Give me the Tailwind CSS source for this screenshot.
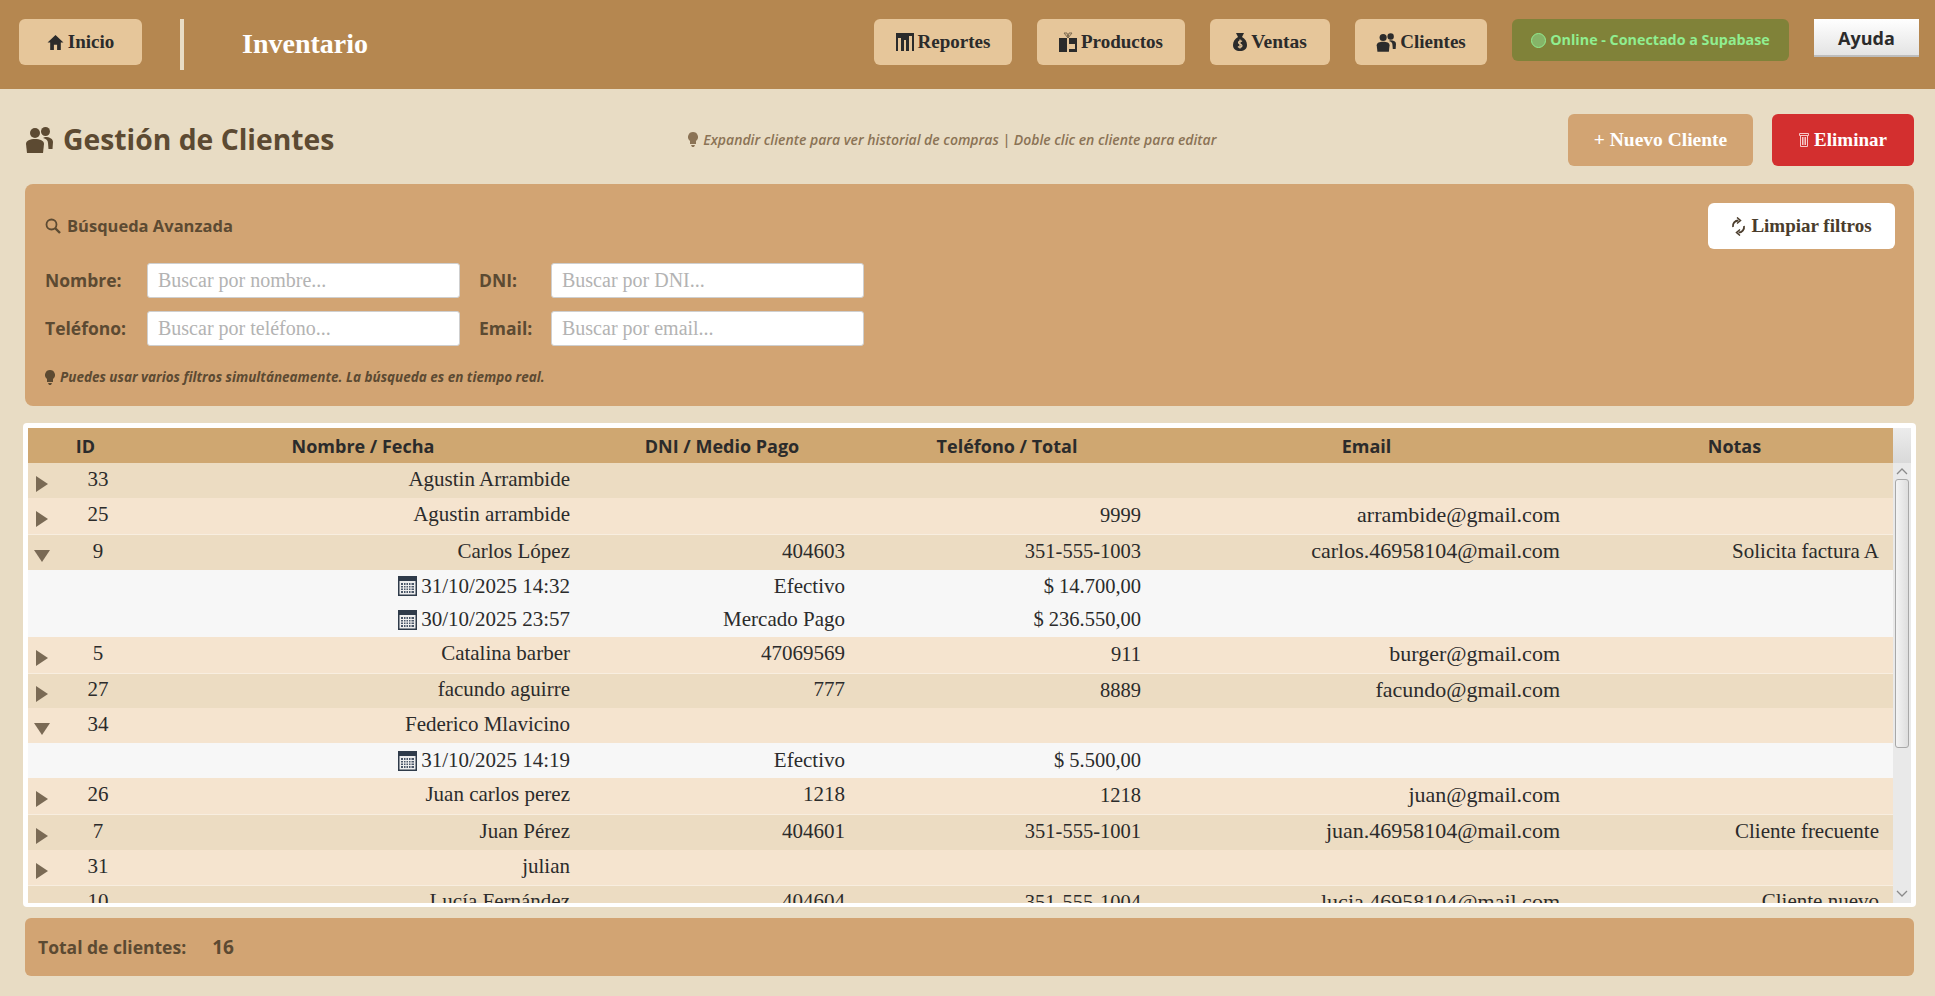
<!DOCTYPE html>
<html lang="es">
<head>
  <meta charset="UTF-8" />
  <title>Inventario</title>
  <script src="https://cdn.jsdelivr.net/npm/@tailwindcss/browser@4"></script>
</head>
<body class="h-[996px] w-[1935px] overflow-hidden bg-[#e8dcc4] font-['Liberation_Serif',serif] text-[#2b2b2b]">

  <!-- Navbar -->
  <header class="h-[89px] bg-[#b58750] flex items-start pt-[19px] pl-[19px] pr-[16px]">
    <a class="w-[123px] h-[46px] rounded-md bg-[#e6c69a] flex items-center justify-center gap-[4px] text-[19px] font-bold">
      <svg class="w-[17px] h-[17px]" viewBox="0 0 16 16" fill="#2b2b2b"><path d="M8 1 0.500 8H3v7h3.500v-5h3v5H13V8h2.500z"/></svg>
      Inicio
    </a>
    <div class="w-[4px] h-[51px] bg-[#e8dcc4] ml-[38px]"></div>
    <h1 class="ml-[58px] mt-[4px] text-[28px] font-bold text-white">Inventario</h1>
    <nav class="ml-auto flex items-start">
      <a class="w-[138px] h-[46px] rounded-md bg-[#e6c69a] flex items-center justify-center gap-[4px] text-[19px] font-bold">
        <svg class="w-[18px] h-[18px]" viewBox="0 0 18 18" fill="#2b2b2b"><path d="M0 0h18v18h-2V3h-3v15h-3V7H8v11H5V5H2v13H0z"/></svg>
        Reportes
      </a>
      <a class="ml-[25px] w-[148px] h-[46px] rounded-md bg-[#e6c69a] flex items-center justify-center gap-[4px] text-[19px] font-bold">
        <svg class="w-[18px] h-[20px]" viewBox="0 0 18 20" fill="#2b2b2b"><path d="M0 6h8v14H0zM10 6h8v14h-8v-3h6v-5h-6z"/><path d="M9 6 5 1h3l1 5 1-5h3z" fill="none" stroke="#7d6a50"/></svg>
        Productos
      </a>
      <a class="ml-[25px] w-[120px] h-[46px] rounded-md bg-[#e6c69a] flex items-center justify-center gap-[4px] text-[19.500px] font-bold">
        <svg class="w-[14px] h-[18px]" viewBox="0 0 14 18" fill="#2b2b2b"><path d="M3 0h8L9 4c3 1.500 5 4.500 5 8 0 4-3 6-7 6s-7-2-7-6c0-3.500 2-6.500 5-8z"/><path d="M9 8.500C8 7.500 5.500 7.800 5.500 9.500S9 11 9 12.800 6 14.500 5 13.500M7 6.500v9" fill="none" stroke="#e6c69a" stroke-width="1.200"/></svg>
        Ventas
      </a>
      <a class="ml-[25px] w-[132px] h-[46px] rounded-md bg-[#e6c69a] flex items-center justify-center gap-[4px] text-[19px] font-bold">
        <svg class="w-[20px] h-[19px]" viewBox="0 0 28 26" fill="#2b2b2b"><circle cx="10" cy="6" r="5"/><circle cx="20.500" cy="4.500" r="4.500"/><path d="M2 26 1 17c0-3.500 4-5 9-5s9 1.500 9 5l-1 9z"/><path d="M20 10c5 0 8 2 8 5l-.5 7h-4l-.5-6c0-2.500-2-4.500-5-5z"/></svg>
        Clientes
      </a>
      <div class="ml-[25px] w-[277px] h-[42px] rounded-md bg-[#808239] flex items-center justify-center gap-[4px] font-['Open_Sans',sans-serif] text-[14.300px] font-bold text-[#90ee90]">
        <span class="w-[15px] h-[15px] rounded-full bg-[#86b468] border border-[#90ee90]"></span>
        Online - Conectado a Supabase
      </div>
      <button class="ml-[25px] w-[105px] h-[38px] pt-[2px] bg-gradient-to-b from-white to-[#e4e4e4] border-b-2 border-[#bdbdbd] font-['Open_Sans',sans-serif] text-[18px] font-bold">Ayuda</button>
    </nav>
  </header>

  <main class="pl-[25px] pr-[21px]">
    <!-- Titulo -->
    <div class="h-[95px] flex items-start pt-[25px]">
      <svg class="w-[28px] h-[26px] mt-[13px]" viewBox="0 0 28 26" fill="#5c4a32"><circle cx="10" cy="6" r="5"/><circle cx="20.500" cy="4.500" r="4.500"/><path d="M2 26 1 17c0-3.500 4-5 9-5s9 1.500 9 5l-1 9z"/><path d="M20 10c5 0 8 2 8 5l-.5 7h-4l-.5-6c0-2.500-2-4.500-5-5z"/></svg>
      <h2 class="ml-[10px] mt-[4px] font-['Open_Sans',sans-serif] text-[28.300px] font-bold text-[#5c4a32]">Gestión de Clientes</h2>
      <p class="ml-[354px] mt-[15px] flex items-center gap-[5px] font-['Open_Sans',sans-serif] text-[14px] italic font-semibold text-[#8b7355]">
        <svg class="w-[10px] h-[15px]" viewBox="0 0 10 15" fill="#8b7355"><path d="M5 0a5 5 0 0 1 3 9v3H2V9a5 5 0 0 1 3-9zM3 13h4l-1 2H4z"/></svg>
        Expandir cliente para ver historial de compras | Doble clic en cliente para editar
      </p>
      <button class="ml-auto w-[185px] h-[52px] rounded-md bg-[#d2a473] text-white text-[19.500px] font-bold">+ Nuevo Cliente</button>
      <button class="ml-[19px] w-[142px] h-[52px] rounded-md bg-[#d32f2f] text-white text-[19px] font-bold flex items-center justify-center gap-[5px]">
        <svg class="w-[10px] h-[14px]" viewBox="0 0 10 14" fill="none" stroke="#f7c9c9"><path d="M0.500 0.500h9v2h-9zM1.500 2.500h7v11h-7zM3.500 4v8M5 4v8M6.500 4v8"/></svg>
        Eliminar
      </button>
    </div>

    <!-- Filtros -->
    <section class="h-[222px] rounded-lg bg-[#d2a473] px-[20px] pt-[19px]">
      <div class="flex items-start justify-between">
        <h3 class="mt-[11px] flex items-center gap-[6px] font-['Open_Sans',sans-serif] text-[16.500px] font-bold text-[#5c4a32]">
          <svg class="w-[16px] h-[16px]" viewBox="0 0 16 16" fill="none" stroke="#5c4a32" stroke-width="1.800"><circle cx="6.500" cy="6.500" r="5"/><path d="M10 10l5 5" stroke-width="2.400"/></svg>
          Búsqueda Avanzada
        </h3>
        <button class="w-[187px] h-[46px] rounded-md bg-white text-[19px] font-bold text-[#4a3c2c] flex items-center justify-center gap-[5px] -mr-[1px]">
          <svg class="w-[15px] h-[19px]" viewBox="0 0 15 19" fill="none" stroke="#4a3c2c" stroke-width="1.800"><path d="M2 10A5.500 5.500 0 0 1 7.500 3.500M13 9A5.500 5.500 0 0 1 7.500 15.500"/><path d="M6 0.500l3.500 3-3.500 3M9 12.500l-3.500 3 3.500 3" stroke-width="1.500"/></svg>
          Limpiar filtros
        </button>
      </div>
      <div class="mt-[14px] grid grid-cols-[102px_313px_91px_313px] gap-y-[13px] items-center">
        <label class="font-['Open_Sans',sans-serif] text-[17.500px] font-bold text-[#5c4a32]">Nombre:</label>
        <input class="h-[35px] rounded-[3px] bg-white border border-[#cfcfcf] px-[10px] text-[20px] placeholder:text-[#b3b3b3]" placeholder="Buscar por nombre..." />
        <label class="pl-[19px] font-['Open_Sans',sans-serif] text-[17.500px] font-bold text-[#5c4a32]">DNI:</label>
        <input class="h-[35px] rounded-[3px] bg-white border border-[#cfcfcf] px-[10px] text-[20px] placeholder:text-[#b3b3b3]" placeholder="Buscar por DNI..." />
        <label class="font-['Open_Sans',sans-serif] text-[17.500px] font-bold text-[#5c4a32]">Teléfono:</label>
        <input class="h-[35px] rounded-[3px] bg-white border border-[#cfcfcf] px-[10px] text-[20px] placeholder:text-[#b3b3b3]" placeholder="Buscar por teléfono..." />
        <label class="pl-[19px] font-['Open_Sans',sans-serif] text-[17.500px] font-bold text-[#5c4a32]">Email:</label>
        <input class="h-[35px] rounded-[3px] bg-white border border-[#cfcfcf] px-[10px] text-[20px] placeholder:text-[#b3b3b3]" placeholder="Buscar por email..." />
      </div>
      <p class="mt-[21px] flex items-center gap-[5px] font-['Open_Sans',sans-serif] text-[13.500px] italic font-bold text-[#5c4a32]">
        <svg class="w-[10px] h-[15px]" viewBox="0 0 10 15" fill="#5c4a32"><path d="M5 0a5 5 0 0 1 3 9v3H2V9a5 5 0 0 1 3-9zM3 13h4l-1 2H4z"/></svg>
        Puedes usar varios filtros simultáneamente. La búsqueda es en tiempo real.
      </p>
    </section>

    <!-- Tabla -->
    <section class="mt-[17px] -mx-[2px] h-[484px] rounded-sm bg-white pt-[5px] pb-[4px] px-[5px] flex">
      <div class="w-[1865px] overflow-hidden">
        <table class="w-[1865px] table-fixed border-collapse text-[21px] leading-none">
          <colgroup>
            <col class="w-[118px]" /><col class="w-[434px]" /><col class="w-[275px]" /><col class="w-[296px]" /><col class="w-[419px]" /><col class="w-[323px]" />
          </colgroup>
          <thead>
            <tr class="h-[35px] bg-[#cfa771] font-['Open_Sans',sans-serif] text-[18px] font-bold">
              <th class="pr-[3px]">ID</th><th>Nombre / Fecha</th><th class="pl-[9px]">DNI / Medio Pago</th><th class="pl-[8px]">Teléfono / Total</th><th class="pl-[12px]">Email</th><th class="pl-[6px]">Notas</th>
            </tr>
          </thead>
          <tbody>
            <tr class="h-[35px] bg-[#ecdcc2] *:pr-[10px] *:pb-[2px] *:text-right">
              <td><div class="flex items-center"><svg class="w-[28px] h-[16px] mt-[9px]" viewBox="0 0 28 16" fill="#7a6a55"><path d="M8 0l12 8-12 8z"/></svg><span class="flex-1 text-center pl-[4px]">33</span></div></td>
              <td>Agustin Arrambide</td><td></td><td></td><td></td><td></td>
            </tr>
            <tr class="h-[36px] bg-[#f5e4cf] border-b border-[#f8eee0] *:pr-[10px] *:pb-[2px] *:text-right">
              <td><div class="flex items-center"><svg class="w-[28px] h-[16px] mt-[9px]" viewBox="0 0 28 16" fill="#7a6a55"><path d="M8 0l12 8-12 8z"/></svg><span class="flex-1 text-center pl-[4px]">25</span></div></td>
              <td>Agustin arrambide</td><td></td><td class="text-[20.500px]">9999</td><td class="text-[22px]">arrambide@gmail.com</td><td></td>
            </tr>
            <tr class="h-[36px] bg-[#ecdcc2] *:pr-[10px] *:pb-[2px] *:text-right">
              <td><div class="flex items-center"><svg class="w-[28px] h-[12px] mt-[9px]" viewBox="0 0 28 12" fill="#7a6a55"><path d="M6 0h16l-8 12z"/></svg><span class="flex-1 text-center pl-[4px]">9</span></div></td>
              <td>Carlos López</td><td>404603</td><td class="text-[20.500px]">351-555-1003</td><td class="text-[22px]">carlos.46958104@mail.com</td><td><span class="mr-[4px]">Solicita factura A</span></td>
            </tr>
            <tr class="h-[32px] bg-[#f7f7f7] *:pr-[10px] *:text-right">
              <td></td>
              <td class="pt-[4px]"><span class="inline-flex items-center gap-[4px]"><svg class="w-[19px] h-[20px]" viewBox="0 0 19 20"><path d="M0 0h19v20H0z" fill="#2f3b4a"/><path d="M1.500 5h16v13.500h-16z" fill="#eee"/><path d="M3 7h13v10H3z" fill="#4a5768"/><path d="M3 9.500h13M3 12h13M3 14.500h13M5.500 7v10M8 7v10M10.500 7v10M13 7v10" stroke="#eee"/></svg>31/10/2025 14:32</span></td>
              <td>Efectivo</td><td class="text-[20.500px]">$ 14.700,00</td><td></td><td></td>
            </tr>
            <tr class="h-[35px] bg-[#f7f7f7] *:pr-[10px] *:text-right">
              <td></td>
              <td class="pt-[4px]"><span class="inline-flex items-center gap-[4px]"><svg class="w-[19px] h-[20px]" viewBox="0 0 19 20"><path d="M0 0h19v20H0z" fill="#2f3b4a"/><path d="M1.500 5h16v13.500h-16z" fill="#eee"/><path d="M3 7h13v10H3z" fill="#4a5768"/><path d="M3 9.500h13M3 12h13M3 14.500h13M5.500 7v10M8 7v10M10.500 7v10M13 7v10" stroke="#eee"/></svg>30/10/2025 23:57</span></td>
              <td>Mercado Pago</td><td class="text-[20.500px]">$ 236.550,00</td><td></td><td></td>
            </tr>
            <tr class="h-[36px] bg-[#f5e4cf] border-b border-[#f8eee0] *:pr-[10px] *:pb-[2px] *:text-right">
              <td><div class="flex items-center"><svg class="w-[28px] h-[16px] mt-[9px]" viewBox="0 0 28 16" fill="#7a6a55"><path d="M8 0l12 8-12 8z"/></svg><span class="flex-1 text-center pl-[4px]">5</span></div></td>
              <td>Catalina barber</td><td>47069569</td><td class="text-[20.500px]">911</td><td class="text-[22px]">burger@gmail.com</td><td></td>
            </tr>
            <tr class="h-[35px] bg-[#ecdcc2] *:pr-[10px] *:pb-[2px] *:text-right">
              <td><div class="flex items-center"><svg class="w-[28px] h-[16px] mt-[9px]" viewBox="0 0 28 16" fill="#7a6a55"><path d="M8 0l12 8-12 8z"/></svg><span class="flex-1 text-center pl-[4px]">27</span></div></td>
              <td>facundo aguirre</td><td>777</td><td class="text-[20.500px]">8889</td><td class="text-[22px]">facundo@gmail.com</td><td></td>
            </tr>
            <tr class="h-[35px] bg-[#f5e4cf] *:pr-[10px] *:pb-[2px] *:text-right">
              <td><div class="flex items-center"><svg class="w-[28px] h-[12px] mt-[9px]" viewBox="0 0 28 12" fill="#7a6a55"><path d="M6 0h16l-8 12z"/></svg><span class="flex-1 text-center pl-[4px]">34</span></div></td>
              <td>Federico Mlavicino</td><td></td><td></td><td></td><td></td>
            </tr>
            <tr class="h-[35px] bg-[#f7f7f7] *:pr-[10px] *:text-right">
              <td></td>
              <td class="pt-[4px]"><span class="inline-flex items-center gap-[4px]"><svg class="w-[19px] h-[20px]" viewBox="0 0 19 20"><path d="M0 0h19v20H0z" fill="#2f3b4a"/><path d="M1.500 5h16v13.500h-16z" fill="#eee"/><path d="M3 7h13v10H3z" fill="#4a5768"/><path d="M3 9.500h13M3 12h13M3 14.500h13M5.500 7v10M8 7v10M10.500 7v10M13 7v10" stroke="#eee"/></svg>31/10/2025 14:19</span></td>
              <td>Efectivo</td><td class="text-[20.500px]">$ 5.500,00</td><td></td><td></td>
            </tr>
            <tr class="h-[36px] bg-[#f5e4cf] border-b border-[#f8eee0] *:pr-[10px] *:pb-[2px] *:text-right">
              <td><div class="flex items-center"><svg class="w-[28px] h-[16px] mt-[9px]" viewBox="0 0 28 16" fill="#7a6a55"><path d="M8 0l12 8-12 8z"/></svg><span class="flex-1 text-center pl-[4px]">26</span></div></td>
              <td>Juan carlos perez</td><td>1218</td><td class="text-[20.500px]">1218</td><td class="text-[22px]">juan@gmail.com</td><td></td>
            </tr>
            <tr class="h-[36px] bg-[#ecdcc2] *:pr-[10px] *:pb-[2px] *:text-right">
              <td><div class="flex items-center"><svg class="w-[28px] h-[16px] mt-[9px]" viewBox="0 0 28 16" fill="#7a6a55"><path d="M8 0l12 8-12 8z"/></svg><span class="flex-1 text-center pl-[4px]">7</span></div></td>
              <td>Juan Pérez</td><td>404601</td><td class="text-[20.500px]">351-555-1001</td><td class="text-[22px]">juan.46958104@mail.com</td><td><span class="mr-[4px]">Cliente frecuente</span></td>
            </tr>
            <tr class="h-[35px] bg-[#f5e4cf] border-b border-[#f8eee0] *:pr-[10px] *:pb-[2px] *:text-right">
              <td><div class="flex items-center"><svg class="w-[28px] h-[16px] mt-[9px]" viewBox="0 0 28 16" fill="#7a6a55"><path d="M8 0l12 8-12 8z"/></svg><span class="flex-1 text-center pl-[4px]">31</span></div></td>
              <td>julian</td><td></td><td></td><td></td><td></td>
            </tr>
            <tr class="h-[35px] bg-[#ecdcc2] *:pr-[10px] *:pb-[2px] *:text-right">
              <td><div class="flex items-center"><span class="w-[28px]"></span><span class="flex-1 text-center pl-[4px]">10</span></div></td>
              <td>Lucía Fernández</td><td>404604</td><td class="text-[20.500px]">351-555-1004</td><td class="text-[22px]">lucia.46958104@mail.com</td><td><span class="mr-[4px]">Cliente nuevo</span></td>
            </tr>
          </tbody>
        </table>
      </div>
      <!-- Scrollbar -->
      <div class="w-[18px] flex flex-col bg-[#e9e9e9]">
        <div class="h-[35px] bg-gradient-to-b from-[#ececec] to-[#d9d9d9]"></div>
        <div class="h-[16px] flex items-center justify-center">
          <svg class="w-[12px] h-[7px]" viewBox="0 0 12 7" fill="none" stroke="#8a8a8a" stroke-width="1.300"><path d="M1 6l5-5 5 5"/></svg>
        </div>
        <div class="h-[269px] mx-[2px] rounded-[3px] border border-[#a8a8a8] bg-gradient-to-r from-[#f4f4f4] to-[#dedede]"></div>
        <div class="flex-1"></div>
        <div class="h-[14px] mb-[3px] flex items-center justify-center">
          <svg class="w-[12px] h-[7px]" viewBox="0 0 12 7" fill="none" stroke="#8a8a8a" stroke-width="1.300"><path d="M1 1l5 5 5-5"/></svg>
        </div>
      </div>
    </section>

    <!-- Totales -->
    <section class="mt-[11px] h-[58px] rounded-md bg-[#d2a473] px-[13px] flex items-center font-['Open_Sans',sans-serif] text-[17.500px] font-bold text-[#5c4a32]">
      <span>Total de clientes:</span>
      <span class="ml-[26px] text-[19px]">16</span>
    </section>
  </main>
</body>
</html>
